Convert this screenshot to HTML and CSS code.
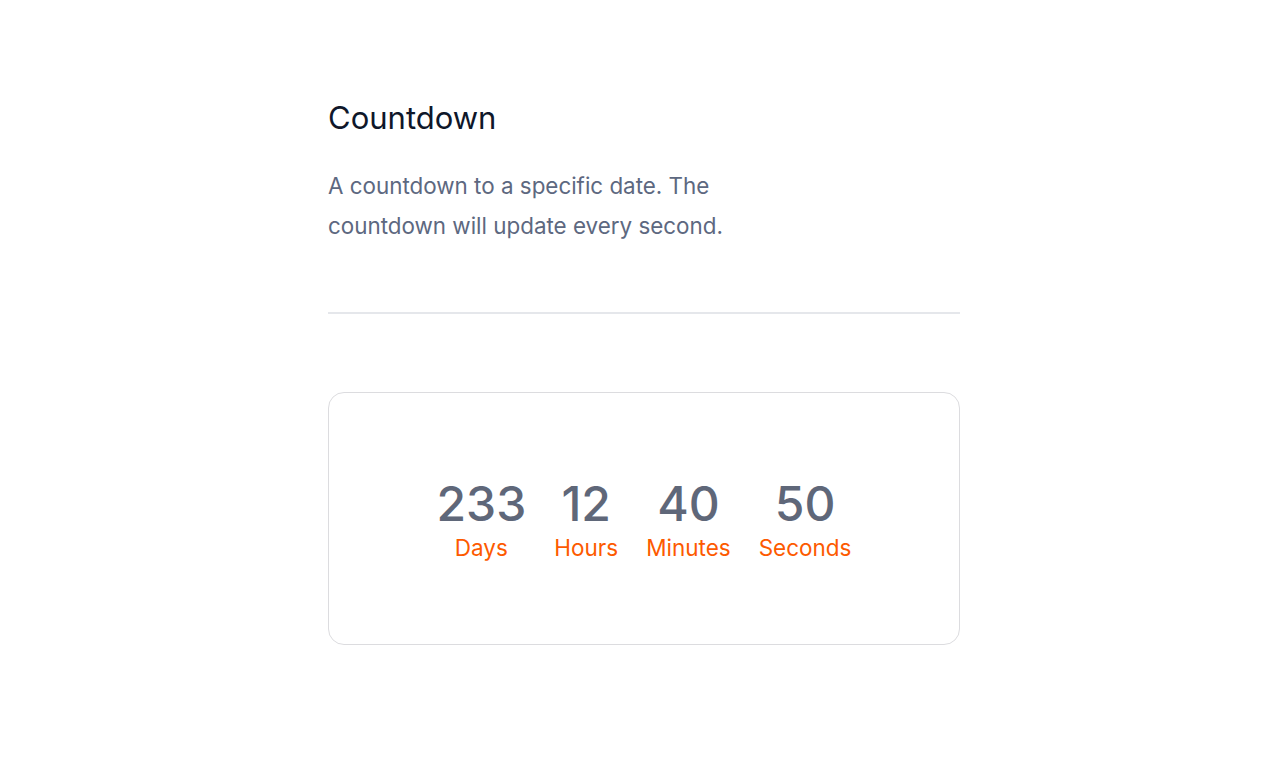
FILE: index.html
```html
<!DOCTYPE html>
<html lang="en">
<head>
    <meta charset="UTF-8">
    <meta name="viewport" content="width=device-width, initial-scale=1.0">
    <title>Countdown</title>
    <link rel="stylesheet" href="styles.css">
</head>
<body>
    <div class="container">
        <h1>Countdown</h1>
        <p class="intro">A countdown to a specific date. The countdown will update every second.</p>

        <hr class="divider">

        <div class="card">
            <div class="countdown">
                <div class="unit">
                    <span class="value">233</span>
                    <span class="label">Days</span>
                </div>
                <div class="unit">
                    <span class="value">12</span>
                    <span class="label">Hours</span>
                </div>
                <div class="unit">
                    <span class="value">40</span>
                    <span class="label">Minutes</span>
                </div>
                <div class="unit">
                    <span class="value">50</span>
                    <span class="label">Seconds</span>
                </div>
            </div>
        </div>
    </div>
</body>
</html>
```

FILE: styles.css
```css
body {
    margin: 0;
    font-family: Inter, "Noto Sans", sans-serif;
    background: #ffffff;
}
.container {
    width: 632px;
    margin: 0 auto;
    padding: 96px 0 0 8px;
}
h1 {
    margin: 0;
    font-size: 31px;
    font-weight: 400;
    line-height: 44px;
    color: #0f172a;
}
.intro {
    margin: 26px 0 0;
    max-width: 400px;
    font-size: 22.4px;
    line-height: 40px;
    color: #5d6880;
}
.divider {
    margin: 66px 0 0;
    border: none;
    border-top: 2px solid #e5e7eb;
}
.card {
    margin-top: 78px;
    height: 251px;
    border: 1px solid #dcdcdf;
    border-radius: 16px;
    background: #ffffff;
    display: flex;
    align-items: center;
    justify-content: center;
}
.countdown {
    display: flex;
    gap: 28px;
}
.unit {
    display: flex;
    flex-direction: column;
    align-items: center;
}
.value {
    font-size: 48px;
    font-weight: 500;
    line-height: 58px;
    color: #5f6779;
}
.label {
    font-size: 22.5px;
    line-height: 30px;
    color: #fd5a00;
}
```
